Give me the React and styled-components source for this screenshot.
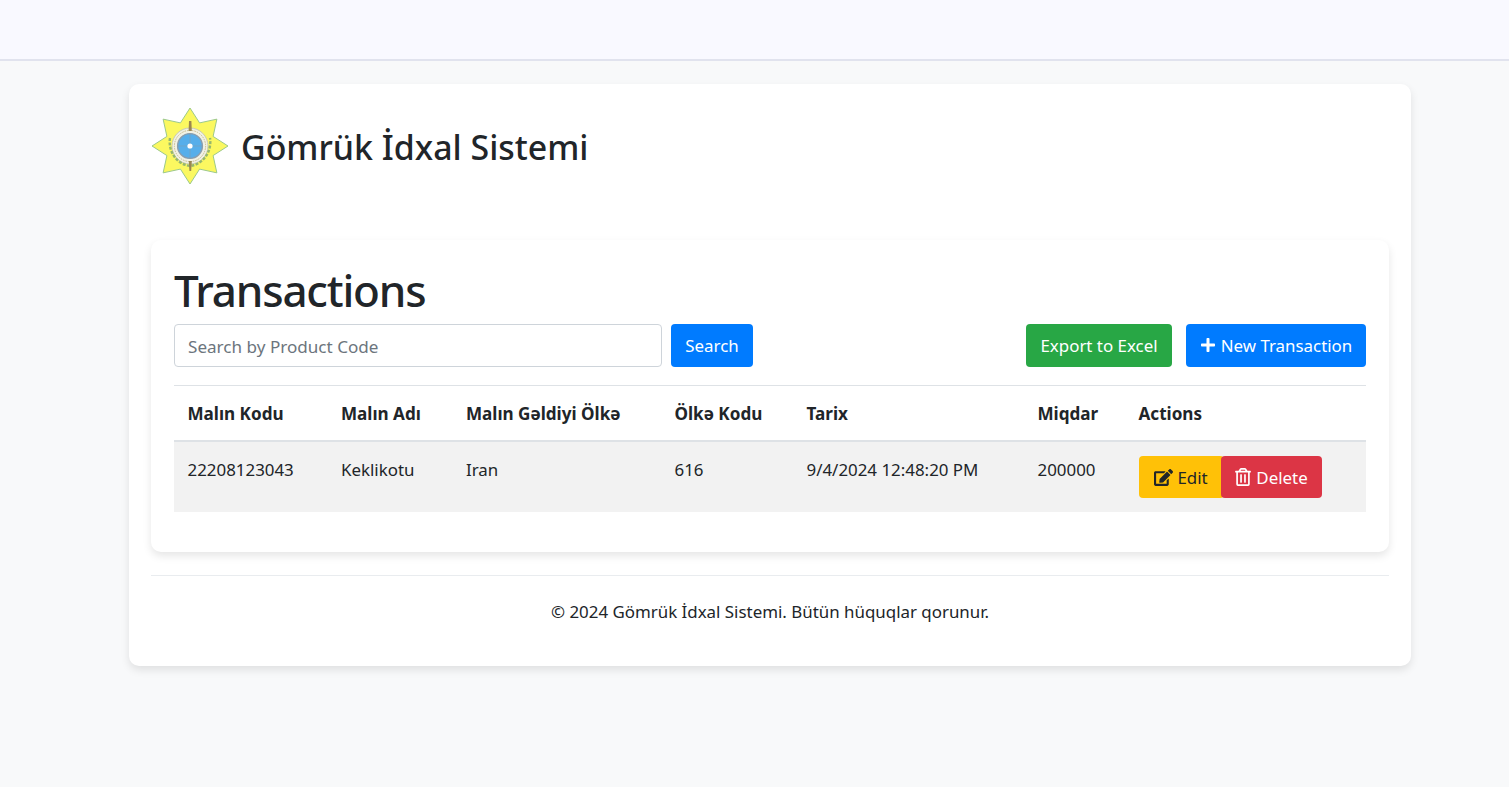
import styled, { createGlobalStyle } from "styled-components"
import { FaEdit, FaPlus, FaRegTrashAlt } from "react-icons/fa"

const GlobalStyle = createGlobalStyle`
  * { box-sizing: border-box; }
  body {
    margin: 0;
    background: #f8f9fa;
    color: #212529;
    font-family: "Noto Sans", "Open Sans", sans-serif;
    font-size: 16.9px;
    line-height: 1.5;
  }
`

const TopBar = styled.div`
  height: 61px;
  background: #f9f9ff;
  border-bottom: 2px solid #e1e3ee;
`

const Page = styled.div`
  width: 1282px;
  margin: 23px auto 40px 129px;
  padding: 22px 22px 42px;
  background: #fff;
  border-radius: 10px;
  box-shadow: 0 4px 8px rgba(0, 0, 0, 0.1);
`

const Brand = styled.header`
  display: flex;
  align-items: center;
  gap: 12px;
  height: 82px;
  margin-bottom: 52px;
`

const BrandTitle = styled.h1`
  margin: 0;
  font-size: 33.9px;
  font-weight: 500;
  line-height: 1.2;
`

const Panel = styled.section`
  padding: 24px 23px 40px;
  border-radius: 10px;
  box-shadow: 0 4px 8px rgba(0, 0, 0, 0.1);
`

const PanelTitle = styled.h2`
  margin: 0 0 7px;
  font-size: 44px;
  font-weight: 500;
  line-height: 1.2;
  letter-spacing: -1.2px;
`

const Toolbar = styled.div`
  display: flex;
  align-items: center;
  gap: 9px;
  margin-bottom: 18px;
`

const SearchInput = styled.input`
  width: 488px;
  height: 43px;
  padding: 2px 13px 0;
  border: 1px solid #ced4da;
  border-radius: 4px;
  font: inherit;
  font-size: 17.1px;
  color: #495057;

  &::placeholder {
    color: #6c757d;
    opacity: 1;
  }
`

const Button = styled.button`
  display: inline-flex;
  align-items: center;
  justify-content: center;
  gap: ${(p) => p.$gap || 5}px;
  height: ${(p) => p.$height || 43}px;
  width: ${(p) => p.$width}px;
  margin-left: ${(p) => p.$push || 0};
  padding: 0;
  border: 0;
  border-radius: 4px;
  background: ${(p) => p.$bg};
  color: ${(p) => p.$fg || "#fff"};
  font: inherit;
  white-space: nowrap;
`

const Table = styled.table`
  width: 1192px;
  border-collapse: collapse;
  table-layout: fixed;
`

const HeadCell = styled.th`
  height: 56px;
  padding: 1px 13.5px 0;
  border-top: 1px solid #dee2e6;
  border-bottom: 2px solid #dee2e6;
  font-size: 17.1px;
  font-weight: 700;
  text-align: left;
  white-space: nowrap;
`

const BodyRow = styled.tr`
  background: #f2f2f2;
`

const Cell = styled.td`
  height: 71px;
  padding: 15px 13.5px 0;
  vertical-align: top;
  white-space: nowrap;
`

const Actions = styled.div`
  display: flex;
  margin-top: -1px;
`

const Rule = styled.hr`
  margin: 23px 0 0;
  border: 0;
  border-top: 1px solid #e9ecef;
`

const Footer = styled.footer`
  padding-top: 24px;
  text-align: center;
  line-height: 24px;
`

function Logo() {
  const spikes = Array.from({ length: 16 }, (_, i) => {
    const angle = (i * Math.PI) / 8 - Math.PI / 2
    const r = i % 2 === 0 ? 38 : 25
    return `${39 + r * Math.cos(angle)},${38 + r * Math.sin(angle)}`
  }).join(" ")

  return (
    <svg width="78" height="78" viewBox="0 0 78 78" aria-hidden="true">
      <polygon points={spikes} fill="#fbf860" stroke="#9cc98a" strokeWidth="1" />
      <circle cx="39" cy="38" r="18" fill="#f1f1e4" stroke="#c9cbb4" strokeWidth="1" />
      <circle cx="39" cy="38" r="15.6" fill="none" stroke="#c9b98a" strokeWidth="1" strokeDasharray="1.5 1" />
      <path d="M19 30c-2 13 6 26 20 28 14-2 22-15 20-28" fill="none" stroke="#96b76e" strokeWidth="2.4" strokeDasharray="3 1.4" />
      <path d="M38 13h2.4l.4 10h-3.2zM37.8 53h3l-.6 10h-1.8z" fill="#9a8650" />
      <circle cx="39" cy="38" r="12.4" fill="#56aeea" stroke="#8a9cac" strokeWidth="1.4" />
      <path d="M27 38h24M39 26v24" stroke="#7f9db4" strokeWidth="0.6" />
      <circle cx="39" cy="38" r="2.6" fill="#fff" />
    </svg>
  )
}

const columns = [
  { label: "Malın Kodu", width: 153.5 },
  { label: "Malın Adı", width: 125 },
  { label: "Malın Gəldiyi Ölkə", width: 208.5 },
  { label: "Ölkə Kodu", width: 132 },
  { label: "Tarix", width: 231 },
  { label: "Miqdar", width: 101 },
  { label: "Actions", width: 241 },
]

const row = ["22208123043", "Keklikotu", "Iran", "616", "9/4/2024 12:48:20 PM", "200000"]

export default function App() {
  return (
    <>
      <GlobalStyle />
      <TopBar />
      <Page>
        <Brand>
          <Logo />
          <BrandTitle>Gömrük İdxal Sistemi</BrandTitle>
        </Brand>
        <Panel>
          <PanelTitle>Transactions</PanelTitle>
          <Toolbar>
            <SearchInput placeholder="Search by Product Code" />
            <Button $bg="#007bff" $width={82}>Search</Button>
            <Button $bg="#28a745" $width={146} $push="auto">Export to Excel</Button>
            <Button $bg="#007bff" $width={180} $push="5px">
              <FaPlus size={16} />
              New Transaction
            </Button>
          </Toolbar>
          <Table>
            <colgroup>
              {columns.map((col) => (
                <col key={col.label} style={{ width: col.width }} />
              ))}
            </colgroup>
            <thead>
              <tr>
                {columns.map((col) => (
                  <HeadCell key={col.label}>{col.label}</HeadCell>
                ))}
              </tr>
            </thead>
            <tbody>
              <BodyRow>
                {row.map((value) => (
                  <Cell key={value}>{value}</Cell>
                ))}
                <Cell>
                  <Actions>
                    <Button $bg="#ffc107" $fg="#212529" $width={85} $height={42} $gap={4}>
                      <FaEdit size={19} />
                      Edit
                    </Button>
                    <Button $bg="#dc3545" $width={101} $height={42} $push="-3px" $gap={4}>
                      <FaRegTrashAlt size={18} />
                      Delete
                    </Button>
                  </Actions>
                </Cell>
              </BodyRow>
            </tbody>
          </Table>
        </Panel>
        <Rule />
        <Footer>© 2024 Gömrük İdxal Sistemi. Bütün hüquqlar qorunur.</Footer>
      </Page>
    </>
  )
}
